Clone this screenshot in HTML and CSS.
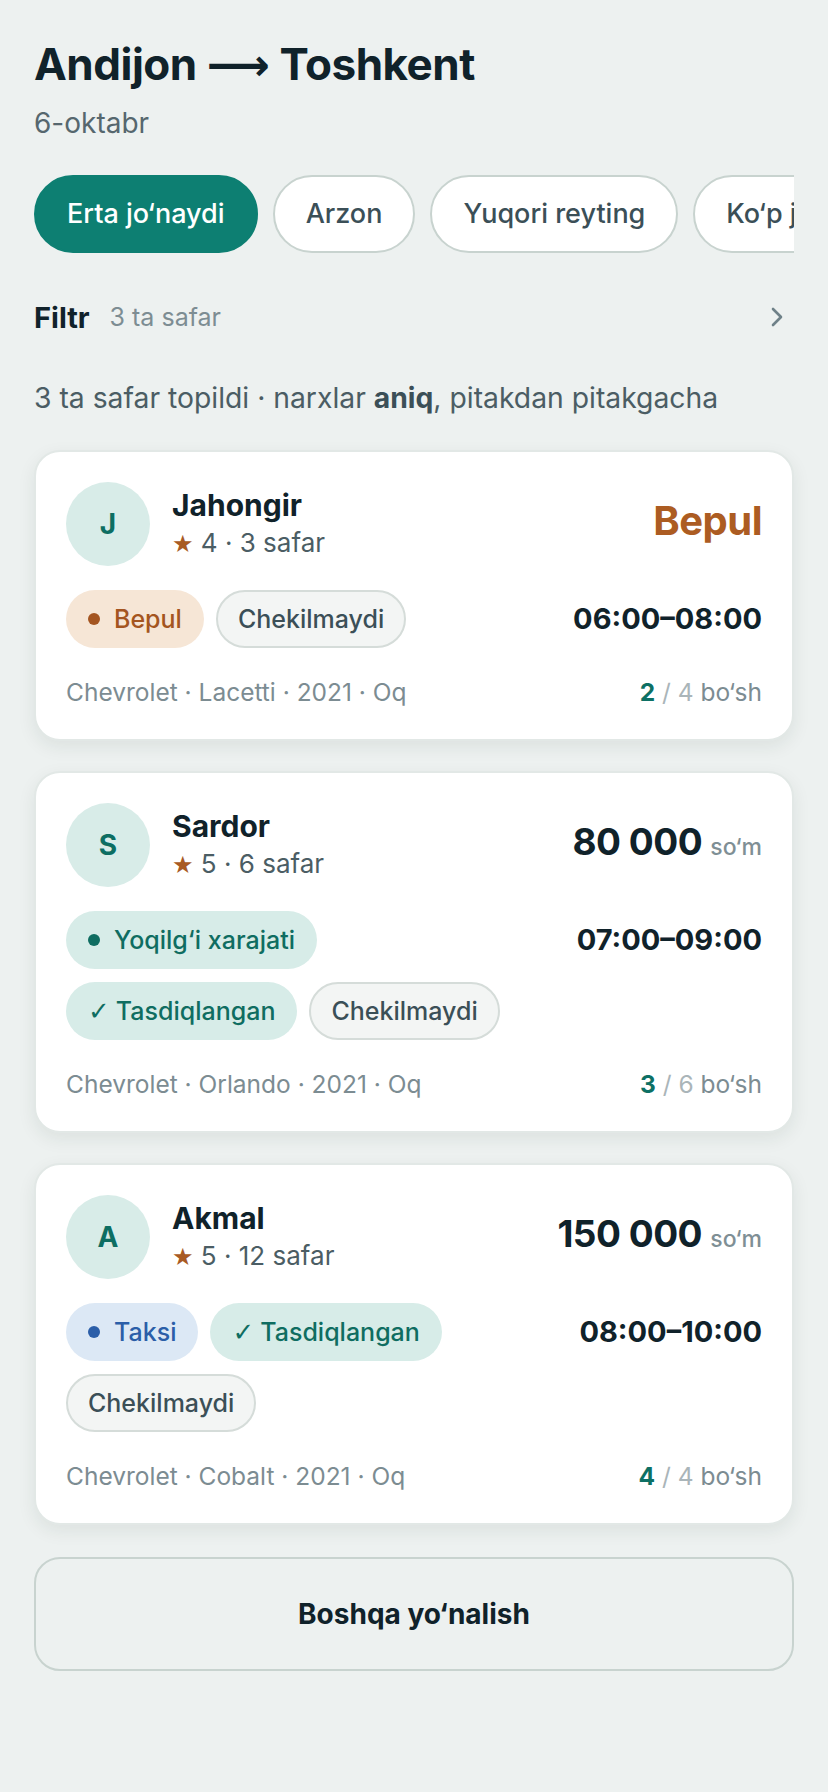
FILE: index.html
```html
<!DOCTYPE html>
<html>
<head>
<meta charset="UTF-8">
<title>Andijon → Toshkent</title>
<link rel="stylesheet" href="styles.css">
</head>
<body>
<div class="page">
  <h1 class="route">Andijon <span class="arrow">⟶</span> Toshkent</h1>
  <div class="date">6-oktabr</div>

  <div class="chips">
    <span class="chip active">Erta jo‘naydi</span>
    <span class="chip">Arzon</span>
    <span class="chip">Yuqori reyting</span>
    <span class="chip">Ko‘p joy</span>
  </div>

  <div class="filter">
    <span class="filter-title">Filtr</span>
    <span class="filter-count">3 ta safar</span>
    <svg class="chevron" width="14" height="22" viewBox="0 0 14 22"><path d="M3 3l8 8-8 8" fill="none" stroke="#6f8188" stroke-width="2.6" stroke-linecap="round" stroke-linejoin="round"/></svg>
  </div>

  <p class="summary">3 ta safar topildi · narxlar <b>aniq</b>, pitakdan pitakgacha</p>

  <div class="list">
    <!-- 1 -->
    <div class="card">
      <div class="card-head">
        <div class="avatar">J</div>
        <div class="driver">
          <div class="name">Jahongir</div>
          <div class="rating"><span class="star">★</span> 4 · 3 safar</div>
        </div>
        <div class="price free">Bepul</div>
      </div>
      <div class="card-body">
        <div class="tags">
          <span class="tag orange"><i class="dot"></i>Bepul</span>
          <span class="tag plain">Chekilmaydi</span>
        </div>
        <div class="time">06:00–08:00</div>
      </div>
      <div class="card-foot">
        <span>Chevrolet · Lacetti · 2021 · Oq</span>
        <span class="seats"><b>2</b> <span class="of">/ 4</span> bo‘sh</span>
      </div>
    </div>

    <!-- 2 -->
    <div class="card">
      <div class="card-head">
        <div class="avatar">S</div>
        <div class="driver">
          <div class="name">Sardor</div>
          <div class="rating"><span class="star">★</span> 5 · 6 safar</div>
        </div>
        <div class="price">80 000 <span class="cur">so‘m</span></div>
      </div>
      <div class="card-body">
        <div class="tags">
          <span class="tag teal"><i class="dot"></i>Yoqilg‘i xarajati</span>
          <span class="tag teal"><span class="check">✓</span>Tasdiqlangan</span>
          <span class="tag plain">Chekilmaydi</span>
        </div>
        <div class="time">07:00–09:00</div>
      </div>
      <div class="card-foot">
        <span>Chevrolet · Orlando · 2021 · Oq</span>
        <span class="seats"><b>3</b> <span class="of">/ 6</span> bo‘sh</span>
      </div>
    </div>

    <!-- 3 -->
    <div class="card">
      <div class="card-head">
        <div class="avatar">A</div>
        <div class="driver">
          <div class="name">Akmal</div>
          <div class="rating"><span class="star">★</span> 5 · 12 safar</div>
        </div>
        <div class="price">150 000 <span class="cur">so‘m</span></div>
      </div>
      <div class="card-body">
        <div class="tags">
          <span class="tag blue"><i class="dot"></i>Taksi</span>
          <span class="tag teal"><span class="check">✓</span>Tasdiqlangan</span>
          <span class="tag plain">Chekilmaydi</span>
        </div>
        <div class="time">08:00–10:00</div>
      </div>
      <div class="card-foot">
        <span>Chevrolet · Cobalt · 2021 · Oq</span>
        <span class="seats"><b>4</b> <span class="of">/ 4</span> bo‘sh</span>
      </div>
    </div>
  </div>

  <button class="other">Boshqa yo‘nalish</button>
</div>
</body>
</html>
```

FILE: styles.css
```css
body {
  margin: 0;
  background-color: #edf1f0;
  font-family: Inter, "Noto Sans", "Liberation Sans", sans-serif;
  color: #10222a;
}

.page {
  padding: 38px 34px 60px;
}

.route {
  margin: 0;
  font-size: 44px;
  line-height: 52px;
  font-weight: 700;
  letter-spacing: -0.5px;
}

.arrow {
  font-family: "DejaVu Sans", sans-serif;
  font-weight: 700;
  letter-spacing: 0;
}

.date {
  margin-top: 14px;
  font-size: 28px;
  line-height: 36px;
  color: #56676e;
}

.chips {
  display: flex;
  gap: 15px;
  margin-top: 34px;
  overflow: hidden;
}

.chip {
  flex: none;
  padding: 21px 31px;
  border: 2px solid #c8d3cf;
  border-radius: 40px;
  background-color: white;
  font-size: 27px;
  line-height: 32px;
  font-weight: 500;
  color: #3b4f57;
}

.chip.active {
  background-color: #0d7f72;
  border-color: #0d7f72;
  color: white;
}

.filter {
  display: flex;
  align-items: center;
  margin-top: 44px;
  height: 40px;
}

.filter-title {
  font-size: 29px;
  font-weight: 700;
}

.filter-count {
  margin-left: 20px;
  font-size: 25px;
  color: #7d8d93;
}

.chevron {
  margin-left: auto;
  margin-right: 10px;
}

.summary {
  margin: 43px 0 0;
  font-size: 28.3px;
  line-height: 36px;
  color: #4b5d64;
}

.summary b {
  color: #3b4f57;
}

.list {
  display: flex;
  flex-direction: column;
  gap: 30px;
  margin-top: 34px;
}

.card {
  background-color: white;
  border: 2px solid #e2e8e6;
  border-radius: 26px;
  padding: 30px 30px 31px;
  box-shadow: 0 6px 18px rgba(20, 45, 40, 0.08);
}

.card-head {
  display: flex;
  align-items: center;
}

.avatar {
  width: 84px;
  height: 84px;
  border-radius: 50%;
  background-color: #d8ece8;
  color: #0d6e62;
  font-size: 28px;
  font-weight: 700;
  display: flex;
  align-items: center;
  justify-content: center;
}

.driver {
  margin-left: 22px;
}

.name {
  font-size: 30px;
  line-height: 34px;
  font-weight: 700;
}

.rating {
  margin-top: 4px;
  font-size: 26px;
  line-height: 34px;
  color: #4b5d64;
}

.star {
  color: #a85a24;
  font-family: "DejaVu Sans", sans-serif;
  font-size: 24px;
}

.price {
  margin-left: auto;
  margin-top: -8px;
  font-size: 37px;
  font-weight: 700;
  letter-spacing: -0.5px;
  white-space: nowrap;
}

.price.free {
  font-size: 40px;
  color: #ac5c22;
}

.cur {
  font-size: 23px;
  font-weight: 500;
  letter-spacing: 0;
  color: #7f8f95;
}

.card-body {
  display: flex;
  align-items: flex-start;
  gap: 24px;
  margin-top: 24px;
}

.tags {
  flex: 1;
  display: flex;
  flex-wrap: wrap;
  gap: 13px 12px;
}

.tag {
  display: inline-flex;
  align-items: center;
  padding: 13px 22px;
  border-radius: 30px;
  font-size: 25px;
  line-height: 32px;
  font-weight: 500;
}

.tag .dot {
  width: 12px;
  height: 12px;
  border-radius: 50%;
  background-color: currentColor;
  margin-right: 14px;
}

.tag .check {
  font-family: "DejaVu Sans", sans-serif;
  font-size: 26px;
  margin-right: 6px;
}

.tag.orange {
  background-color: #f6e6d6;
  color: #a45520;
}

.tag.teal {
  background-color: #d7ece8;
  color: #0f6d61;
}

.tag.blue {
  background-color: #dce8f5;
  color: #2b5ea8;
}

.tag.plain {
  padding: 11px 20px;
  background-color: #f3f5f4;
  border: 2px solid #d5dcd9;
  color: #3b4f57;
}

.time {
  font-size: 29px;
  line-height: 58px;
  font-weight: 700;
  white-space: nowrap;
}

.card-foot {
  display: flex;
  justify-content: space-between;
  margin-top: 28px;
  font-size: 24.5px;
  line-height: 32px;
  color: #7c8c92;
}

.seats b {
  color: #0d7064;
}

.seats .of {
  color: #aab5b9;
}

.other {
  display: block;
  width: 100%;
  height: 114px;
  margin-top: 32px;
  border: 2px solid #c8d3cf;
  border-radius: 26px;
  background: transparent;
  font-family: inherit;
  font-size: 28px;
  font-weight: 700;
  color: #10222a;
}
```
